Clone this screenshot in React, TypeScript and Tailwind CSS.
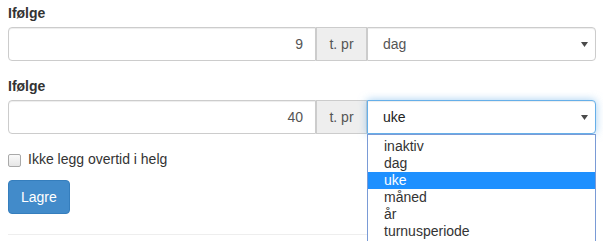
import React from "react";

function Arrow() {
  return (
    <svg width="7" height="5" viewBox="0 0 7 5" className="block">
      <path d="M0 0 H7 L3.5 5 Z" fill="#4a4a4a" />
    </svg>
  );
}

function Row({ value, sel, open }: { value: string; sel: string; open?: boolean }) {
  const options = ["inaktiv", "dag", "uke", "måned", "år", "turnusperiode"];
  return (
    <div className="flex h-[34px] w-full text-[14px] text-[#555]">
      <div className="flex-1 flex items-center justify-end px-3 border border-[#ccc] rounded-l-[4px] bg-white shadow-[inset_0_1px_1px_rgba(0,0,0,0.075)]">
        {value}
      </div>
      <div className="w-[51px] flex items-center justify-center border border-[#ccc] bg-[#eee]">t. pr</div>
      <div className="relative w-[229px]">
        <div
          className={
            open
              ? "h-full flex items-center justify-between pl-[15px] pr-[7px] border border-[#66afe9] rounded-r-[4px] bg-white shadow-[inset_0_1px_1px_rgba(0,0,0,0.075),0_0_8px_rgba(102,175,233,0.6)]"
              : "h-full flex items-center justify-between pl-[15px] pr-[7px] border border-[#ccc] rounded-r-[4px] bg-white shadow-[inset_0_1px_1px_rgba(0,0,0,0.075)]"
          }
        >
          <span className={open ? "text-[#222]" : "text-[#555]"}>{sel}</span>
          <Arrow />
        </div>
        {open && (
          <div className="absolute left-0 right-0 top-full z-10 bg-white border border-[#7a9bd6] pt-[3px] pb-[4px]">
            {options.map((o) => (
              <div
                key={o}
                className={
                  o === sel
                    ? "h-[17px] leading-[17px] pl-[16px] bg-[#1e90ff] text-white"
                    : "h-[17px] leading-[17px] pl-[16px] text-[#333]"
                }
              >
                {o}
              </div>
            ))}
          </div>
        )}
      </div>
    </div>
  );
}

export default function App() {
  return (
    <div
      className="w-[603px] h-[241px] overflow-hidden bg-white"
      style={{ fontFamily: '"Liberation Sans", Arial, sans-serif' }}
    >
      <div className="ml-2 w-[588px] pt-[3px] text-[14px] leading-[20px] text-[#333]">
        <div className="mb-[15px]">
          <div className="font-bold mb-[4px]">Ifølge</div>
          <Row value="9" sel="dag" />
        </div>
        <div className="mb-[15px]">
          <div className="font-bold mb-[4px]">Ifølge</div>
          <Row value="40" sel="uke" open />
        </div>
        <div className="flex items-start h-[20px] mb-[11px]">
          <div className="mt-[5px] w-[13px] h-[13px] rounded-[2px] border border-[#a9a9a9] bg-gradient-to-b from-[#fafafa] to-[#e6e6e6]" />
          <span className="ml-[7px] text-[#333]">Ikke legg overtid i helg</span>
        </div>
        <div className="inline-flex h-[34px] items-center px-3 rounded-[4px] bg-[#428bca] border border-[#357ebd] text-white">
          Lagre
        </div>
        <div className="mt-[20px] border-t border-[#eee]" />
      </div>
    </div>
  );
}
